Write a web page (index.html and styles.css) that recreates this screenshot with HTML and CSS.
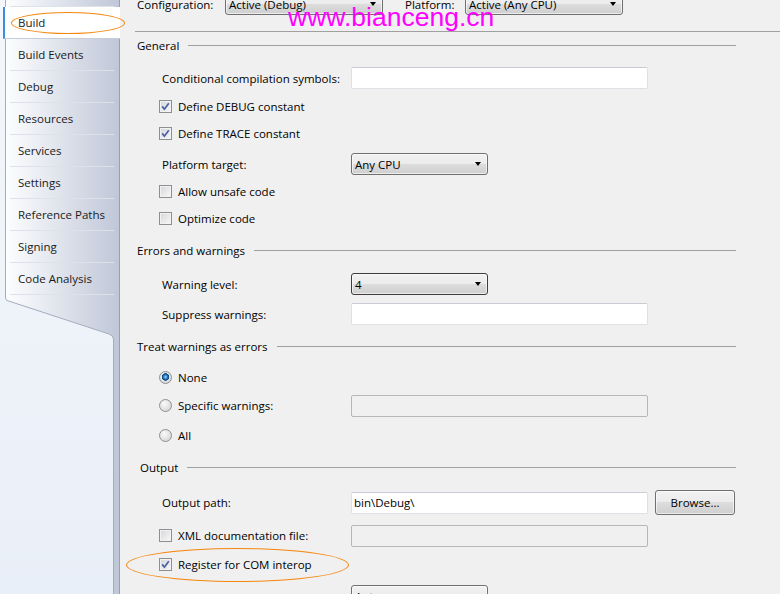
FILE: index.html
```html
<!DOCTYPE html>
<html>
<head>
<meta charset="utf-8">
<title>Build</title>
<link rel="stylesheet" href="styles.css">
</head>
<body>
<div class="window">
  <nav class="sidebar">
    <div class="tabs">
      <div class="tab-cut"></div>
      <div class="tab active">Build</div>
      <div class="tab">Build Events</div>
      <div class="tab">Debug</div>
      <div class="tab">Resources</div>
      <div class="tab">Services</div>
      <div class="tab">Settings</div>
      <div class="tab">Reference Paths</div>
      <div class="tab">Signing</div>
      <div class="tab">Code Analysis</div>
    </div>
    <svg class="tail" width="119" height="45" viewBox="0 0 119 45">
      <defs>
        <linearGradient id="tabgrad" gradientUnits="userSpaceOnUse" x1="6" y1="0" x2="119" y2="0">
          <stop offset="0" stop-color="#fcfdfe"/>
          <stop offset="1" stop-color="#c0c7d8"/>
        </linearGradient>
      </defs>
      <path d="M5,0 V3 Q5,5 8,5.8 L109,39 Q113,40.5 113,44 V45 H119 V0 Z" fill="url(#tabgrad)"/>
      <path d="M5.5,0 V3 Q5.5,5 8,5.8 L109,39 Q113.5,40.5 113.5,44 V45" fill="none" stroke="#a3acc0" stroke-width="1"/>
    </svg>
    <div class="filler"></div>
  </nav>

  <main class="content">
    <div class="toolbar">
      <span class="tlabel cfg">Configuration:</span>
      <div class="combo wide"><span class="val">Active (Debug)</span><span class="arrow"></span></div>
      <span class="tlabel plat">Platform:</span>
      <div class="combo wide"><span class="val">Active (Any CPU)</span><span class="arrow"></span></div>
    </div>
    <div class="rule"></div>

    <section class="group">
      <div class="group-head top"><span>General</span><i></i></div>
      <div class="row first">
        <span class="lbl">Conditional compilation symbols:</span>
        <div class="text"></div>
      </div>
      <div class="row">
        <span class="check"><span class="cb on"><svg viewBox="0 0 13 13" width="13" height="13"><path d="M3.2,6.4 L5.4,9.2 L9.8,3.2" fill="none" stroke="#4a5fa0" stroke-width="1.7"/></svg></span>Define DEBUG constant</span>
      </div>
      <div class="row g5">
        <span class="check"><span class="cb on"><svg viewBox="0 0 13 13" width="13" height="13"><path d="M3.2,6.4 L5.4,9.2 L9.8,3.2" fill="none" stroke="#4a5fa0" stroke-width="1.7"/></svg></span>Define TRACE constant</span>
      </div>
      <div class="row g9">
        <span class="lbl">Platform target:</span>
        <div class="combo"><span class="val">Any CPU</span><span class="arrow"></span></div>
      </div>
      <div class="row g5">
        <span class="check"><span class="cb"></span>Allow unsafe code</span>
      </div>
      <div class="row g5">
        <span class="check"><span class="cb"></span>Optimize code</span>
      </div>
    </section>

    <section class="group">
      <div class="group-head"><span>Errors and warnings</span><i></i></div>
      <div class="row g15">
        <span class="lbl">Warning level:</span>
        <div class="combo focus"><span class="val">4</span><span class="arrow"></span></div>
      </div>
      <div class="row g8">
        <span class="lbl">Suppress warnings:</span>
        <div class="text"></div>
      </div>
    </section>

    <section class="group">
      <div class="group-head"><span>Treat warnings as errors</span><i></i></div>
      <div class="row g12">
        <span class="check"><span class="rb on"></span>None</span>
      </div>
      <div class="row g7">
        <span class="lbl"><span class="check"><span class="rb"></span>Specific warnings:</span></span>
        <div class="text disabled"></div>
      </div>
      <div class="row g7">
        <span class="check"><span class="rb"></span>All</span>
      </div>
    </section>

    <section class="group">
      <div class="group-head out"><span>Output</span><i></i></div>
      <div class="row tall g15">
        <span class="lbl">Output path:</span>
        <div class="text"><span class="val">bin\Debug\</span></div>
        <div class="button">Browse...</div>
      </div>
      <div class="row g10">
        <span class="lbl"><span class="check"><span class="cb"></span>XML documentation file:</span></span>
        <div class="text disabled"></div>
      </div>
      <div class="row">
        <span class="check"><span class="cb on"><svg viewBox="0 0 13 13" width="13" height="13"><path d="M3.2,6.4 L5.4,9.2 L9.8,3.2" fill="none" stroke="#4a5fa0" stroke-width="1.7"/></svg></span>Register for COM interop</span>
      </div>
      <div class="row g10">
        <span class="lbl"></span>
        <div class="combo"><span class="val">Auto</span><span class="arrow"></span></div>
      </div>
    </section>
  </main>
</div>

<div class="watermark">www.bianceng.cn</div>
<div class="mark mark-build"></div>
<div class="mark mark-com"></div>
</body>
</html>
```

FILE: styles.css
```css
html, body {
  margin: 0;
  padding: 0;
}
body {
  width: 780px;
  height: 594px;
  overflow: hidden;
  position: relative;
  background: #f0f0f0;
  color: #000;
  font-family: "Open Sans", "Noto Sans", sans-serif;
  font-size: 11.5px;
}

.window {
  display: flex;
  height: 594px;
}

/* ---------- sidebar ---------- */
.sidebar {
  width: 119px;
  flex: none;
  display: flex;
  flex-direction: column;
  border-right: 1px solid #a0a0a0;
  background: linear-gradient(#f4f7fc, #e9eff8);
}
.tabs {
  margin-left: 5px;
  border-left: 1px solid #a3acc0;
  background: linear-gradient(to right, #fcfdfe, #c0c7d8);
}
.tab-cut {
  height: 7px;
  background: linear-gradient(#dde1e9, #dde1e9) no-repeat 4px 100% / 104px 1px;
}
.tab {
  height: 32px;
  line-height: 31px;
  padding-left: 12px;
  color: #1a1a1a;
  background: linear-gradient(#dde1e9, #dde1e9) no-repeat 4px 100% / 104px 1px;
}
.tab.active {
  height: 31px;
  margin-left: -3px;
  margin-right: -1px;
  border-left: 2px solid #3a8ee0;
  border-bottom: 1px solid #c6ccd8;
  background: #fff;
  padding-left: 13px;
}
.tail {
  display: block;
  flex: none;
}
.filler {
  flex: 1;
  background: linear-gradient(to right, transparent 0 113px, #a3acc0 113px 114px, #c0c7d8 114px);
}

/* ---------- content ---------- */
.content {
  flex: 1;
  padding: 0 44px 0 17px;
}
.toolbar {
  display: flex;
  align-items: center;
  height: 22px;
  margin-top: -7px;
}
.tlabel.cfg { width: 88px; }
.tlabel.plat { width: 60px; margin-left: 22px; }

.rule {
  height: 1px;
  background: #a0a0a0;
  margin: 16px -44px 0 -2px;
}

.group-head {
  display: flex;
  align-items: center;
  height: 16px;
  margin-top: 13px;
}
.group-head.top { margin-top: 5px; }
.group-head.out { padding-left: 3px; }
.group-head i {
  flex: 1;
  height: 1px;
  margin-left: 9px;
  background: #a0a0a0;
}

.row {
  display: flex;
  align-items: center;
  height: 22px;
  padding-left: 25px;
  margin-top: 6px;
}
.row.first { margin-top: 14px; }
.row.g5 { margin-top: 5px; }
.row.g7 { margin-top: 7px; }
.row.g8 { margin-top: 8px; }
.row.g9 { margin-top: 9px; }
.row.g10 { margin-top: 10px; }
.row.g12 { margin-top: 12px; }
.row.g15 { margin-top: 15px; }
.row.tall { height: 25px; }

.lbl {
  width: 189px;
  flex: none;
}
.check {
  display: inline-flex;
  align-items: center;
  gap: 6px;
  margin-left: -3px;
}

.cb {
  width: 13px;
  height: 13px;
  box-sizing: border-box;
  border: 1px solid #8e8f8f;
  background: linear-gradient(135deg, #d4d6da, #f8f8f8);
  box-shadow: inset 0 0 0 1px #f2f2f2;
  position: relative;
  flex: none;
}
.cb svg {
  position: absolute;
  left: -1px;
  top: -1px;
}
.rb {
  width: 13px;
  height: 13px;
  box-sizing: border-box;
  border-radius: 50%;
  border: 1px solid #8e8f8f;
  background: radial-gradient(circle at 40% 35%, #fafafa 0, #e4e4e4 50%, #cfcfcf 100%);
  flex: none;
}
.rb.on {
  background:
    radial-gradient(circle at 50% 45%, #9edcfb 0, #3b8bd0 1.6px, #0c4a86 3.2px, #0c4a86 3.5px, transparent 4px),
    radial-gradient(circle at 40% 35%, #fafafa 0, #e4e4e4 50%, #cfcfcf 100%);
}

.text {
  width: 297px;
  height: 22px;
  box-sizing: border-box;
  flex: none;
  background: #fff;
  border: 1px solid #dde1e6;
  border-top-color: #c9ccd2;
  border-radius: 2px;
  display: flex;
  align-items: center;
  padding-left: 2px;
}
.text.disabled {
  background: #f0f0f0;
  border: 1px solid #b7b7b7;
}

.combo {
  width: 137px;
  height: 22px;
  box-sizing: border-box;
  flex: none;
  display: flex;
  align-items: center;
  padding-left: 3px;
  border: 1px solid #707070;
  border-radius: 3px;
  background: linear-gradient(#f2f2f2 0%, #ebebeb 50%, #dddddd 50%, #cfcfcf 100%);
  box-shadow: inset 0 0 0 1px rgba(255,255,255,0.6);
}
.combo.wide { width: 158px; }
.combo.focus { border-color: #3c3c3c; }
.combo .arrow {
  margin-left: auto;
  margin-right: 6px;
  width: 0;
  height: 0;
  border-left: 3.5px solid transparent;
  border-right: 3.5px solid transparent;
  border-top: 4px solid #000;
}

.button {
  width: 80px;
  height: 25px;
  box-sizing: border-box;
  margin-left: 7px;
  flex: none;
  display: flex;
  align-items: center;
  justify-content: center;
  border: 1px solid #707070;
  border-radius: 3px;
  background: linear-gradient(#f2f2f2 0%, #ebebeb 50%, #dddddd 50%, #cfcfcf 100%);
  box-shadow: inset 0 0 0 1px rgba(255,255,255,0.6);
}

/* ---------- overlays ---------- */
.watermark {
  position: absolute;
  left: 288px;
  top: 4px;
  font-family: "Liberation Sans", Arial, sans-serif;
  font-size: 26.5px;
  line-height: 26px;
  color: #ff00ff;
  white-space: nowrap;
}
.mark {
  position: absolute;
  border: 1px solid #f5870f;
  border-radius: 50%;
  box-sizing: border-box;
}
.mark-build {
  left: 11px;
  top: 12px;
  width: 114px;
  height: 22px;
}
.mark-com {
  left: 126px;
  top: 548px;
  width: 223px;
  height: 34px;
}
```
